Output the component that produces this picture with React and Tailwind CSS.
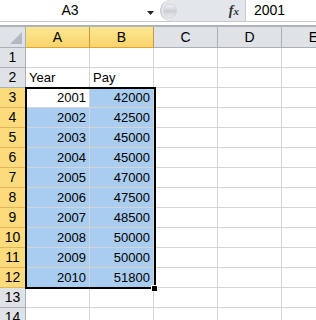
const cols = ["A", "B", "C", "D", "E"];
const widths = ["w-[64px]", "w-[64px]", "w-[64px]", "w-[64px]", "w-[64px]"];

const data = {
  2: ["Year", "Pay"],
  3: [2001, 42000],
  4: [2002, 42500],
  5: [2003, 45000],
  6: [2004, 45000],
  7: [2005, 47000],
  8: [2006, 47500],
  9: [2007, 48500],
  10: [2008, 50000],
  11: [2009, 50000],
  12: [2010, 51800],
};

const rows = Array.from({ length: 14 }, (_, i) => i + 1);

function Cell({ row, idx }) {
  const value = data[row]?.[idx];
  const selected = row >= 3 && row <= 12 && idx < 2;
  const active = row === 3 && idx === 0;
  const isText = typeof value === "string";
  return (
    <div
      className={`${widths[idx]} shrink-0 h-full border-r border-b border-[#d4d4d4] flex items-center px-[3px] ${
        selected && !active ? "bg-[#a9cdf0]" : "bg-white"
      } ${isText ? "justify-start" : "justify-end"}`}
    >
      {value !== undefined && <span className="leading-none">{value}</span>}
    </div>
  );
}

const App = () => {
  return (
    <div
      className="w-[316px] h-[320px] overflow-hidden bg-white text-[13px] text-black"
      style={{ fontFamily: '"Liberation Sans", Arial, sans-serif' }}
    >
      {/* formula bar */}
      <div className="h-[22px] flex border-b border-[#c5cad1]">
        <div className="w-[160px] shrink-0 relative flex items-center justify-center bg-white">
          <span className="text-[14px] -ml-[20px]">A3</span>
          <svg
            className="absolute left-[147px] top-[11px]"
            width="7"
            height="4"
            viewBox="0 0 7 4"
          >
            <path d="M0 0h7L3.5 4z" fill="#222" />
          </svg>
        </div>
        <div className="w-[85px] shrink-0 bg-[#e3e6ea] rounded-l-[11px] border-l border-[#b9bec5] flex items-center justify-between pl-[2px] pr-[6px]">
          <div className="w-[14px] h-[14px] rounded-full bg-gradient-to-b from-[#f4f5f7] via-[#c9ccd1] to-[#e9ebee] border border-[#d2d5d9]" />
          <span
            className="text-[14px] italic font-bold text-[#333]"
            style={{ fontFamily: '"Liberation Serif", serif' }}
          >
            f<span className="text-[11px]">x</span>
          </span>
        </div>
        <div className="flex-1 bg-white border-l border-[#c5cad1] flex items-center pl-[8px] text-[14px]">
          2001
        </div>
      </div>
      <div className="h-[3px] bg-white" />
      <div className="h-[2px] bg-[#aeb4bc]" />

      {/* grid */}
      <div className="relative">
        {/* column headers */}
        <div className="h-[21px] flex">
          <div className="w-[26px] shrink-0 bg-[#dfe3e8] border-r border-b border-[#a8b0ba] relative">
            <svg className="absolute right-[3px] bottom-[3px]" width="12" height="12" viewBox="0 0 12 12">
              <path d="M12 0V12H0z" fill="#b3b9c2" />
            </svg>
          </div>
          {cols.map((c, i) => (
            <div
              key={c}
              className={`${widths[i]} shrink-0 flex items-center justify-center border-r border-b text-[14px] ${
                i < 2
                  ? "bg-gradient-to-b from-[#fde893] to-[#f9d46b] border-r-[#c99a3d] border-b-[#e0a23a]"
                  : "bg-[#dfe3e8] border-[#a8b0ba]"
              }`}
            >
              {c}
            </div>
          ))}
        </div>

        {rows.map((r) => {
          const sel = r >= 3 && r <= 12;
          return (
            <div key={r} className="h-[20px] flex">
              <div
                className={`w-[26px] shrink-0 flex items-center justify-center border-r border-b text-[14px] ${
                  sel
                    ? "bg-[#fbdb7c] border-b-[#e2b55a] border-r-[#e0a23a]"
                    : "bg-[#dfe3e8] border-[#a8b0ba]"
                }`}
              >
                {r}
              </div>
              {cols.map((c, i) => (
                <Cell key={c} row={r} idx={i} />
              ))}
            </div>
          );
        })}

        {/* selection border */}
        <div className="absolute left-[25px] top-[60px] w-[131px] h-[202px] border-2 border-black pointer-events-none" />
        <div className="absolute left-[151px] top-[258px] w-[7px] h-[7px] bg-black border border-white" />
      </div>
    </div>
  );
};

export default App;
